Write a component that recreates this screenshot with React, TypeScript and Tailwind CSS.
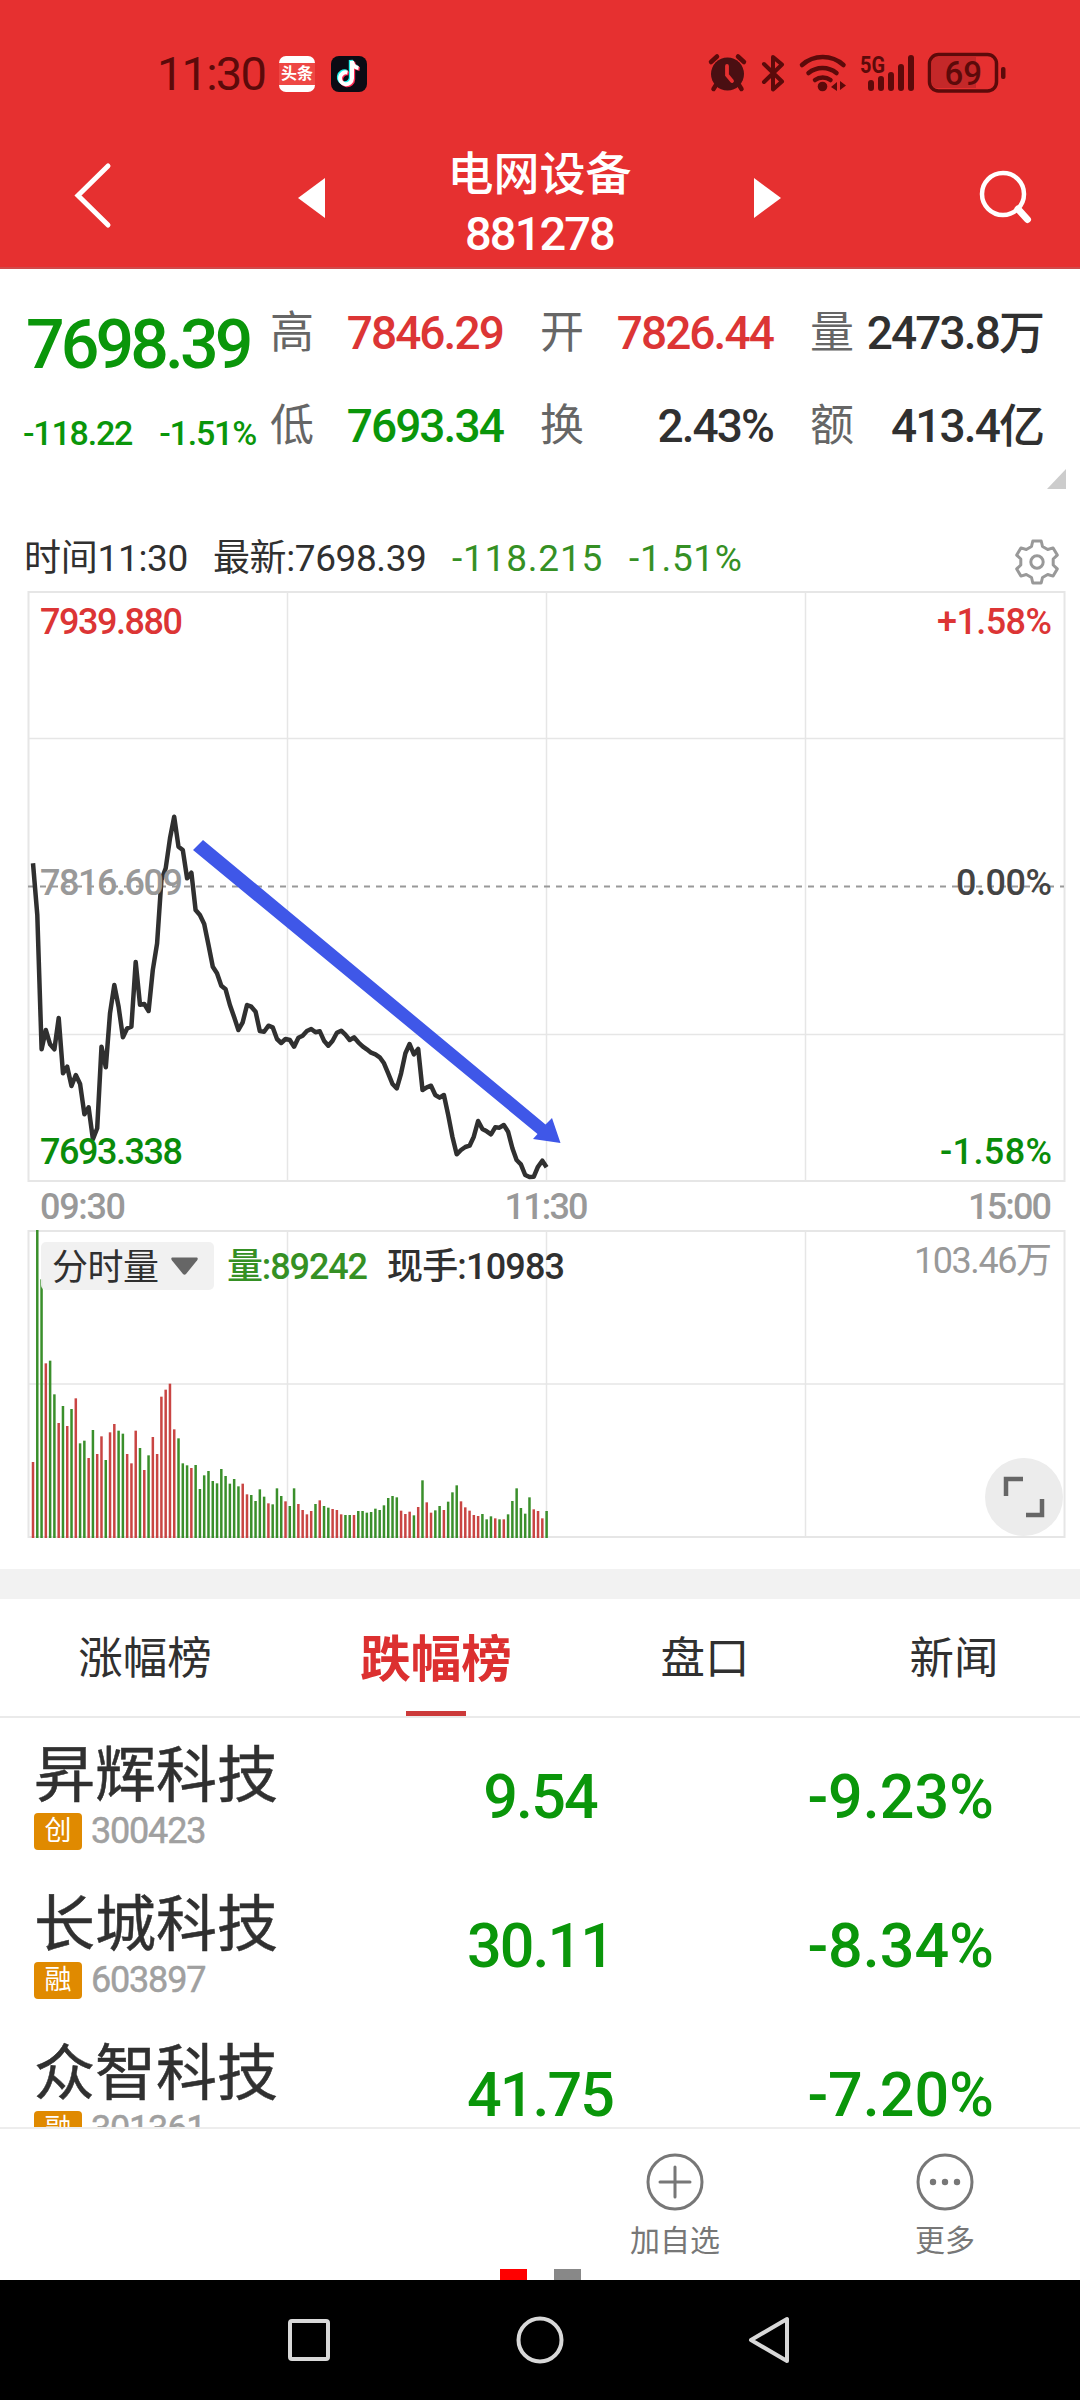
const PRICE = [
  250, 405, 808, 750, 793, 808, 714, 880, 860, 918, 885, 912, 1003, 982, 1078, 1045, 800, 862, 700, 615,
  680, 772, 745, 740, 546, 674, 672, 693, 570, 490, 300, 265, 175, 110, 200, 210, 295, 278, 390, 405,
  432, 495, 560, 580, 617, 628, 675, 712, 750, 727, 675, 680, 695, 753, 755, 737, 742, 777, 789, 777,
  780, 800, 773, 767, 753, 747, 757, 754, 782, 797, 782, 758, 752, 764, 780, 772, 787, 799, 808, 818,
  823, 832, 850, 880, 912, 925, 880, 820, 792, 823, 807, 930, 922, 917, 945, 953, 945, 1005, 1070, 1123,
  1110, 1101, 1097, 1070, 1023, 1047, 1054, 1063, 1042, 1043, 1035, 1055, 1105, 1140, 1153, 1185, 1191, 1190, 1160, 1142,
  1162,
]

// volume per minute, negative = price went down in that minute
const VOLUME = [
  228, -924, -776, 524, -532, -431, 345, -396, 336, -387, 419, -284, -292, 240, -324, 252, 305, -234, 317, 342,
  -322, -313, 252, 224, 322, -270, 204, -248, 303, 252, 424, 445, 463, 326, -299, -224, -218, 210, -219, -147,
  -188, -201, -171, -164, -207, -186, -163, -177, -155, 163, 131, -129, -111, -146, -124, 104, -101, -149, -126, 110,
  -96, -149, 102, 84, 71, 81, -102, 113, -96, -91, 87, 84, 71, -69, -69, 69, -81, -81, -76, -78,
  -88, -84, -98, -120, -126, -122, 82, 72, 79, -68, 93, -173, 107, 76, -83, -96, 84, -109, -137, -158,
  110, 92, 82, 69, 66, -72, -56, -65, 59, -56, 56, -71, -111, -149, -90, -73, -122, 86, 81, 59,
  -81,
]

const STEP = 4.28
const minuteX = (i: number) => 33 + i * STEP

const stocks = [
  { name: '昇辉科技', tag: '创', code: '300423', price: '9.54', change: '-9.23%' },
  { name: '长城科技', tag: '融', code: '603897', price: '30.11', change: '-8.34%' },
  { name: '众智科技', tag: '融', code: '301361', price: '41.75', change: '-7.20%' },
]

function StatusBar() {
  return (
    <div className="flex h-[148px] items-start pt-[54px] pl-[157px] text-[#5c0a0a]">
      <span className="w-[122px] text-[47px] leading-[40px] tracking-[-1.8px]">11:30</span>
      <div className="mt-0.5 flex h-9 w-9 flex-col items-center justify-center rounded-[7px] bg-white">
        <span className="w-full bg-[#ee4744] text-center text-[16px] leading-[22px] font-bold text-white">头条</span>
      </div>
      <svg className="mt-0.5 ml-4" width="36" height="36" viewBox="0 0 36 36">
        <rect width="36" height="36" rx="8" fill="#0b0b14" />
        <g fill="none" strokeWidth="4" transform="translate(-1 -1)">
          <path d="M17.500 17.500a6 6 0 1 0 4.500 6V6c.5 4 3 6.500 6.500 7" stroke="#25f4ee" transform="translate(-1.200 -1)" />
          <path d="M17.500 17.500a6 6 0 1 0 4.500 6V6c.5 4 3 6.500 6.500 7" stroke="#fe2c55" transform="translate(1.200 1)" />
          <path d="M17.500 17.500a6 6 0 1 0 4.500 6V6c.5 4 3 6.500 6.500 7" stroke="#fff" />
        </g>
      </svg>
      <svg className="-mt-1 ml-[333px]" width="310" height="44" viewBox="700 50 310 44">
        <g fill="none" stroke="#5c0a0a" strokeLinecap="round">
          <path d="M711 62l6-5.500M744 62l-6-5.500" strokeWidth="4.500" />
          <path d="M716 85l-2.500 4M739 85l2.500 4" strokeWidth="4.500" />
          <circle cx="727.500" cy="74" r="16.500" fill="#4a0f12" stroke="none" />
          <path d="M727 66v9l5 6" stroke="#e63030" strokeWidth="3.800" />
          <path d="M764 64l18 17.500-9 8V57l9 7.500L764 82" strokeWidth="4" strokeLinejoin="round" />
          <path d="M802 65a31 31 0 0 1 41.500 0M808.500 73a22 22 0 0 1 28 0M815 80a13 13 0 0 1 15.500 0" strokeWidth="4.500" />
          <circle cx="822.500" cy="86.500" r="4.800" fill="#5c0a0a" stroke="none" />
          <path d="M837 82v9l-6-4zM840 90v-9l6 4.500z" fill="#5c0a0a" stroke="none" />
          <path d="M871 83v5M881 79v9M891 75v13M901 67v21M911 58v30" strokeWidth="6" />
        </g>
        <text x="860" y="73" fontSize="24" fontWeight="700" fill="#5c0a0a" textLength="25" lengthAdjust="spacingAndGlyphs">5G</text>
        <path d="M937 57h39v31h-39q-5 0-5-5V62q0-5 5-5z" fill="#c42829" />
        <rect x="929.500" y="54.500" width="67" height="36.500" rx="9" fill="none" stroke="#5c0a0a" strokeWidth="3.500" />
        <rect x="1001" y="67" width="4.500" height="12" rx="2" fill="#5c0a0a" />
        <text x="944.500" y="85" fontSize="33" fontWeight="500" fill="#5c0a0a">69</text>
      </svg>
    </div>
  )
}

function Header() {
  return (
    <header className="h-[269px] border-b-2 border-[#d04a4a] bg-[#e63030] text-white">
      <StatusBar />
      <div className="flex h-[118px] items-start">
        <svg className="mt-[14px] ml-[72px]" width="42" height="68" viewBox="0 0 42 68">
          <path d="M36 4L6 33.500 36 63" fill="none" stroke="#fff" strokeWidth="5" strokeLinecap="round" />
        </svg>
        <svg className="mt-[30px] ml-[184px]" width="27" height="40" viewBox="0 0 27 40">
          <path d="M27 0v40L0 20z" fill="#fff" />
        </svg>
        <div className="flex w-[429px] flex-col items-center">
          <h1 className="mt-[3px] text-[46px] leading-[46px] font-medium">电网设备</h1>
          <span className="mt-[14px] text-[47px] leading-[46px] font-medium tracking-[-1.900px]">881278</span>
        </div>
        <svg className="mt-[30px]" width="27" height="40" viewBox="0 0 27 40">
          <path d="M0 0v40l27-20z" fill="#fff" />
        </svg>
        <svg className="mt-[20px] ml-[195px]" width="60" height="60" viewBox="0 0 60 60">
          <circle cx="27" cy="26" r="21" fill="none" stroke="#fff" strokeWidth="4.500" />
          <path d="M42 41l9.500 10.500" stroke="#fff" strokeWidth="7" strokeLinecap="round" />
        </svg>
      </div>
    </header>
  )
}

function Stat({ label, value, color }: { label: string; value: string; color: string }) {
  return (
    <div className="flex items-center justify-between leading-[60px]">
      <span className="text-[44px] text-[#666]">{label}</span>
      <span className={`text-[46px] font-medium tracking-[-1.9px] ${color}`}>{value}</span>
    </div>
  )
}

function Quote() {
  return (
    <section className="flex h-[251px] items-start">
      <div className="w-[270px] text-[#0a960a]">
        <div className="mt-[36px] pl-[26px] text-[68px] leading-[80px] font-medium tracking-[-3.900px]">7698.39</div>
        <div className="mt-[23px] flex justify-between pr-[14px] pl-[23px] text-[34px] leading-[50px] font-medium tracking-[-1.200px]">
          <span>-118.22</span>
          <span>-1.51%</span>
        </div>
      </div>
      <div className="mt-[34px] grid grid-cols-[233px_233px_233px] gap-x-[37px] gap-y-[33px]">
        <Stat label="高" value="7846.29" color="text-[#dc3535]" />
        <Stat label="开" value="7826.44" color="text-[#dc3535]" />
        <Stat label="量" value="2473.8万" color="text-[#303030]" />
        <Stat label="低" value="7693.34" color="text-[#0a960a]" />
        <Stat label="换" value="2.43%" color="text-[#303030]" />
        <Stat label="额" value="413.4亿" color="text-[#303030]" />
      </div>
      <svg className="mt-[200px] ml-1" width="19" height="20" viewBox="0 0 19 20">
        <path d="M19 0v20H0z" fill="#ccc" />
      </svg>
    </section>
  )
}

function GearIcon() {
  // one tooth, repeated every 60 degrees
  const tooth = [[-5.5, -15.5], [-4.2, -21], [4.2, -21], [5.5, -15.5]]
  const points = [0, 60, 120, 180, 240, 300].flatMap((deg) => {
    const a = (deg * Math.PI) / 180
    return tooth.map(([x, y]) => {
      const px = 25 + x * Math.cos(a) - y * Math.sin(a)
      const py = 25 + x * Math.sin(a) + y * Math.cos(a)
      return `${px.toFixed(1)},${py.toFixed(1)}`
    })
  })
  return (
    <svg className="mt-[5px] ml-auto" width="50" height="50" viewBox="0 0 50 50" fill="none" stroke="#999" strokeWidth="3" strokeLinejoin="round">
      <polygon points={points.join(' ')} />
      <circle cx="25" cy="25" r="6.200" />
    </svg>
  )
}

function ChartInfo() {
  return (
    <div className="flex h-[66px] items-center pt-3 pr-[18px] pl-6 text-[37px] text-[#303030]">
      <span className="w-[189px] tracking-[-0.300px]">时间11:30</span>
      <span className="w-[239px] tracking-[-0.400px]">最新:7698.39</span>
      <span className="w-[177px] tracking-[0.800px] text-[#359024]">-118.215</span>
      <span className="tracking-[0.700px] text-[#359024]">-1.51%</span>
      <GearIcon />
    </div>
  )
}

function PriceChart() {
  const points = PRICE.map((v, i) => `${minuteX(i).toFixed(1)},${(780 + v / 3).toFixed(1)}`).join(' ')
  return (
    <svg className="block" width="1080" height="644" viewBox="0 586 1080 644" fontSize="36" fontWeight="500">
      <g fill="none" stroke="#e6e6e6" strokeWidth="1.500">
        <rect x="28.500" y="592" width="1036" height="589" strokeWidth="2" />
        <path d="M28 738.500h1036M28 1034.500h1036M287.500 592v589M546.500 592v589M805.500 592v589" />
      </g>
      <path d="M28 886.500h1036" stroke="#999" strokeWidth="2" strokeDasharray="6 6" />
      <polyline points={points} fill="none" stroke="#303030" strokeWidth="4.500" strokeLinejoin="round" />
      <text x="40" y="634" fill="#dc3535" textLength="143">7939.880</text>
      <text x="40" y="895" fill="#999" textLength="143">7816.609</text>
      <text x="40" y="1164" fill="#0a8c0a" textLength="143">7693.338</text>
      <text x="1052" y="634" fill="#dc3535" textAnchor="end" textLength="115">+1.58%</text>
      <text x="1052" y="895" fill="#444" textAnchor="end" textLength="96">0.00%</text>
      <text x="1052" y="1164" fill="#0a8c0a" textAnchor="end" textLength="112">-1.58%</text>
      <g fill="#999">
        <text x="40" y="1219" textLength="86">09:30</text>
        <text x="546.500" y="1219" textAnchor="middle" textLength="84">11:30</text>
        <text x="1052" y="1219" textAnchor="end" textLength="84">15:00</text>
      </g>
      <path d="M203 840L545.500 1124.500 552 1118 560.500 1143 533 1139 537.500 1134 193 850z" fill="#3f57e8" />
    </svg>
  )
}

function VolumeChart() {
  return (
    <svg className="block" width="1080" height="339" viewBox="0 1230 1080 339" fontSize="36" fontWeight="500">
      <g fill="none" stroke="#e6e6e6" strokeWidth="1.500">
        <rect x="28.500" y="1231" width="1036" height="306" strokeWidth="2" />
        <path d="M28 1384h1036M287.500 1231v306M546.500 1231v306M805.500 1231v306" />
      </g>
      {VOLUME.map((v, i) => (
        <rect
          key={i}
          x={minuteX(i) - 1.25}
          y={1538 - Math.abs(v) / 3}
          width="2.5"
          height={Math.abs(v) / 3}
          fill={v < 0 ? '#3a8f2b' : '#c94543'}
        />
      ))}
      <rect x="41" y="1242" width="173" height="48" rx="5" fill="#f0f0f0" fillOpacity="0.95" />
      <text x="52" y="1280" fill="#303030" fontWeight="400" textLength="107">分时量</text>
      <path d="M172 1257.500h25q1.500 1 0 3l-11 13.500q-1.500 1.500-3 0l-11-13.500q-1.500-2 0-3z" fill="#666" />
      <text x="227" y="1279" fill="#359024" textLength="141">量:89242</text>
      <text x="387" y="1279" fill="#303030" textLength="178">现手:10983</text>
      <text x="1052" y="1273" fill="#999" fontWeight="400" textAnchor="end" textLength="138">103.46万</text>
      <circle cx="1024" cy="1497" r="39" fill="#ececec" />
      <path d="M1023 1479h-17v17M1042 1499v16h-16" fill="none" stroke="#666" strokeWidth="4.500" />
    </svg>
  )
}

function Tabs() {
  return (
    <nav className="flex h-[119px] border-b-2 border-[#eaeaea] text-[44.500px] leading-[121px] text-[#303030]">
      <span className="w-[290px] text-center">涨幅榜</span>
      <div className="flex w-[292px] flex-col items-center text-[50.500px] font-bold text-[#dc3030]">
        <span className="h-[112px]">跌幅榜</span>
        <span className="h-1.5 w-[60px] bg-[#cc3a3a]" />
      </div>
      <span className="w-[246px] text-center">盘口</span>
      <span className="w-[252px] text-center">新闻</span>
    </nav>
  )
}

function StockList() {
  return (
    <ul className="h-[409px] overflow-hidden">
      {stocks.map((s) => (
        <li key={s.code} className="flex h-[149px]">
          <div className="w-[405px] pt-[27px] pl-[34px]">
            <div className="text-[61px] leading-[62px] text-[#303030] [-webkit-text-stroke:0.5px_#303030]">{s.name}</div>
            <div className="mt-[5px] flex items-center">
              <span className="h-[37px] w-12 rounded bg-[#e08a00] text-center text-[27px] leading-[36px] text-white">{s.tag}</span>
              <span className="ml-[9px] pt-px text-[36px] leading-[37px] tracking-[-1.200px] text-[#a0a0a0] [-webkit-text-stroke:0.5px_#a0a0a0]">{s.code}</span>
            </div>
          </div>
          <div className="w-[270px] text-center text-[61px] leading-[158px] font-medium tracking-[-1.900px] text-[#0a960a]">{s.price}</div>
          <div className="w-[319px] text-right text-[61px] leading-[158px] font-medium text-[#0a960a]">{s.change}</div>
        </li>
      ))}
    </ul>
  )
}

function BottomBar() {
  return (
    <footer>
      <div className="flex h-[142px] justify-end border-t-2 border-[#ededed] text-[30px] leading-[34px] text-[#777]">
        <div className="flex w-[270px] flex-col items-center pt-6">
          <svg width="60" height="60" viewBox="0 0 60 60" fill="none" stroke="#777" strokeWidth="3" strokeLinecap="round">
            <circle cx="30" cy="29" r="27" />
            <path d="M15 29h30M30 14v30" />
          </svg>
          <span className="mt-[11px]">加自选</span>
        </div>
        <div className="flex w-[270px] flex-col items-center pt-6">
          <svg width="60" height="60" viewBox="0 0 60 60" fill="#777">
            <circle cx="30" cy="29" r="27" fill="none" stroke="#777" strokeWidth="3" />
            <circle cx="18" cy="29" r="3.2" />
            <circle cx="30" cy="29" r="3.2" />
            <circle cx="42" cy="29" r="3.2" />
          </svg>
          <span className="mt-[11px]">更多</span>
        </div>
      </div>
      <div className="flex h-[11px] justify-center gap-[27px]">
        <span className="w-[27px] bg-[#ff0000]" />
        <span className="w-[27px] bg-[#888]" />
      </div>
      <div className="flex h-[120px] items-center justify-center gap-[181px] bg-black">
        <svg width="50" height="50" viewBox="0 0 50 50" fill="none" stroke="#d8d8d8" strokeWidth="4">
          <rect x="6" y="6" width="38" height="38" rx="2" />
        </svg>
        <svg width="50" height="50" viewBox="0 0 50 50" fill="none" stroke="#d8d8d8" strokeWidth="4">
          <circle cx="25" cy="25" r="21.500" />
        </svg>
        <svg width="50" height="50" viewBox="0 0 50 50" fill="none" stroke="#d8d8d8" strokeWidth="4" strokeLinejoin="round">
          <path d="M41 4v42L5 25z" />
        </svg>
      </div>
    </footer>
  )
}

export default function App() {
  return (
    <div className="flex h-[2400px] w-[1080px] flex-col overflow-hidden bg-white font-['Roboto','Noto_Sans_CJK_SC',sans-serif]">
      <Header />
      <Quote />
      <ChartInfo />
      <PriceChart />
      <VolumeChart />
      <div className="h-[30px] bg-[#f2f2f2]" />
      <Tabs />
      <StockList />
      <BottomBar />
    </div>
  )
}
